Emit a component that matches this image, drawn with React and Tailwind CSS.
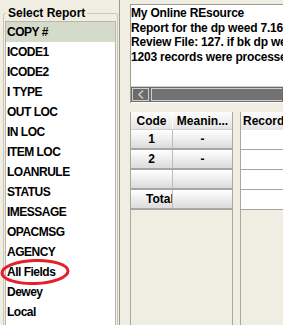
import React from "react"

const reports = [
  "COPY #",
  "ICODE1",
  "ICODE2",
  "I TYPE",
  "OUT LOC",
  "IN LOC",
  "ITEM LOC",
  "LOANRULE",
  "STATUS",
  "IMESSAGE",
  "OPACMSG",
  "AGENCY",
  "All Fields",
  "Dewey",
  "Local",
]

const lines = [
  "My Online REsource",
  "Report for the dp weed 7.16.2013",
  "Review File: 127. if bk dp weed",
  "1203 records were processed",
]

const rows = [
  { code: "1", meaning: "-" },
  { code: "2", meaning: "-" },
  { code: "", meaning: "" },
]

export default function App() {
  return (
    <div className="relative w-[283px] h-[325px] overflow-hidden bg-[#f0ede2] flex text-black font-bold text-[12px] font-['Liberation_Sans',Arial,sans-serif]">
      {/* Report list */}
      <div className="w-[119px] shrink-0 pl-[3px] pr-[1px]">
        <fieldset className="mt-[6px] px-[1px] border border-[#c9c7ba] rounded-[2px] h-[340px]">
          <legend className="ml-[1px] px-[2px] leading-[14px]">Select Report</legend>
          <div className="mt-[1px] bg-white border border-[#b9b7ac] h-[330px]">
            {reports.map((r, i) => (
              <div
                key={r}
                className={
                  "h-[20px] leading-[20px] pl-[1px] tracking-[-0.5px] whitespace-nowrap " +
                  (i === 0 ? "bg-[#d5dbcb]" : "")
                }
              >
                {r}
              </div>
            ))}
          </div>
        </fieldset>
      </div>

      {/* splitter */}
      <div className="w-[1px] shrink-0 bg-[#9c9a90]" />
      <div className="w-[10px] shrink-0" />

      {/* Right side */}
      <div className="flex-1 min-w-0 flex flex-col pt-[4px]">
        <div className="h-[99px] bg-white border-l border-t border-[#9f9d94] flex flex-col pb-[1px]">
          <div className="pt-[1px] leading-[14.7px] tracking-[-0.2px]">
            {lines.map((l) => (
              <div key={l} className="whitespace-nowrap overflow-hidden">
                {l}
              </div>
            ))}
          </div>
          <div className="flex-1" />
          <div className="h-[16px] bg-[#6b6b6b] border-t border-[#cfcfcf] flex p-[1px] gap-[2px]">
            <div className="w-[17px] border border-[#cfcfcf] flex items-center justify-center">
              <svg width="6" height="9" viewBox="0 0 6 9">
                <path d="M5 0.5 L1 4.5 L5 8.5" stroke="#c4c4c4" strokeWidth="1.6" fill="none" />
              </svg>
            </div>
            <div className="flex-1 border border-r-0 border-[#cfcfcf] bg-[#727272]" />
          </div>
        </div>

        <div className="flex-1 flex mt-[9px]">
          {/* Code table */}
          <div className="w-[103px] border-l border-r border-[#aaa89e]">
            <div className="flex h-[18px] leading-[18px] bg-linear-to-b from-[#fdfdfd] to-[#e4e4e4] border-b border-[#cfcfcf]">
              <div className="w-[42px] text-center border-r border-white">Code</div>
              <div className="flex-1 text-center">Meanin...</div>
            </div>
            {rows.map((r, i) => (
              <div
                key={i}
                className="flex h-[20px] leading-[18px] bg-linear-to-b from-white to-[#dcdcdc] border-b-2 border-[#a6a6a6]"
              >
                <div className="w-[42px] text-center border-r border-[#bdbdbd]">{r.code}</div>
                <div className="flex-1 text-center">{r.meaning}</div>
              </div>
            ))}
            <div className="flex h-[20px] leading-[18px] bg-linear-to-b from-white to-[#dcdcdc] border-b-2 border-[#a6a6a6]">
              <div className="w-[42px] pl-[15px] overflow-hidden whitespace-nowrap border-r border-[#bdbdbd]">Total</div>
              <div className="flex-1" />
            </div>
          </div>

          <div className="w-[7px] shrink-0" />

          {/* Record table */}
          <div className="flex-1 min-w-0 border-l border-[#aaa89e]">
            <div className="h-[18px] leading-[18px] pl-[2px] whitespace-nowrap overflow-hidden bg-linear-to-b from-[#fdfdfd] to-[#e4e4e4]">
              Records
            </div>
            {[0, 1, 2, 3].map((i) => (
              <div key={i} className="h-[20px] bg-white border-b border-[#a3a3a3]" />
            ))}
          </div>
        </div>
      </div>

      {/* red annotation */}
      <svg className="absolute left-0 top-[258px]" width="72" height="28" viewBox="0 0 72 28">
        <ellipse
          cx="35"
          cy="14"
          rx="33"
          ry="11.5"
          stroke="#e3202b"
          strokeWidth="3"
          fill="none"
          transform="rotate(-2 35 14)"
        />
      </svg>
    </div>
  )
}
